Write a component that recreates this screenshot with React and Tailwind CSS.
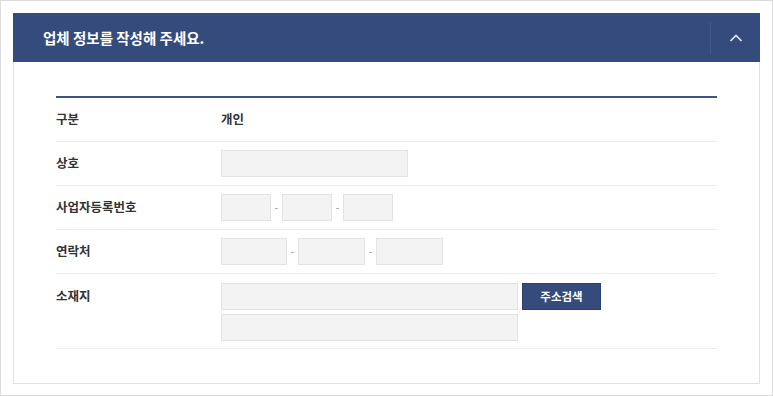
import React from "react";

const FONT = { fontFamily: '"Noto Sans CJK KR", "Noto Sans", sans-serif' };

const Field = ({ className = "" }) => (
  <div className={`h-[27px] bg-[#f3f3f3] border border-[#e3e3e3] ${className}`} />
);

const Dash = () => (
  <span className="w-[11px] text-center text-[11px] leading-none text-[#999]">-</span>
);

const Row = ({ label, children, tall }) => (
  <div className={`flex border-b border-[#ececec] ${tall ? "pt-[9px] pb-[7px]" : "h-[44px] items-center"}`}>
    <div className={`w-[165px] text-[12.5px] font-bold text-[#333] ${tall ? "h-[27px] flex items-center" : ""}`}>
      {label}
    </div>
    <div className="flex-1">{children}</div>
  </div>
);

export default function App() {
  return (
    <div className="w-[773px] h-[396px] border border-[#dcdcdc] bg-white p-3" style={FONT}>
      <div className="h-[371px] border border-[#e1e1e1] bg-white">
        <div className="h-[49px] -mt-px -mx-px bg-[#344b7b] flex items-center">
          <h2 className="flex-1 pl-[30px] text-[14.5px] font-bold text-white">업체 정보를 작성해 주세요.</h2>
          <div className="w-[50px] h-[32px] border-l border-[#42598a] flex items-center justify-center">
            <svg width="14" height="8" viewBox="0 0 14 8" fill="none">
              <path d="M1.5 7L7 1.5L12.5 7" stroke="#dfe5ef" strokeWidth="1.7" />
            </svg>
          </div>
        </div>

        <div className="px-[42px] pt-[34px]">
          <div className="border-t-2 border-[#3d5385]">
            <Row label="구분">
              <span className="text-[12.5px] font-bold text-[#333] relative -top-[3px]">개인</span>
            </Row>
            <Row label="상호">
              <Field className="w-[187px]" />
            </Row>
            <Row label="사업자등록번호">
              <div className="flex items-center">
                <Field className="w-[50px]" />
                <Dash />
                <Field className="w-[50px]" />
                <Dash />
                <Field className="w-[50px]" />
              </div>
            </Row>
            <Row label="연락처">
              <div className="flex items-center">
                <Field className="w-[66px]" />
                <Dash />
                <Field className="w-[67px]" />
                <Dash />
                <Field className="w-[67px]" />
              </div>
            </Row>
            <Row label="소재지" tall>
              <div className="flex flex-col gap-[4px]">
                <div className="flex gap-[4px]">
                  <Field className="w-[297px]" />
                  <button className="w-[79px] h-[27px] bg-[#344b7b] border border-[#2b3f69] text-white text-[11.5px] font-bold">
                    주소검색
                  </button>
                </div>
                <Field className="w-[297px]" />
              </div>
            </Row>
          </div>
        </div>
      </div>
    </div>
  );
}
